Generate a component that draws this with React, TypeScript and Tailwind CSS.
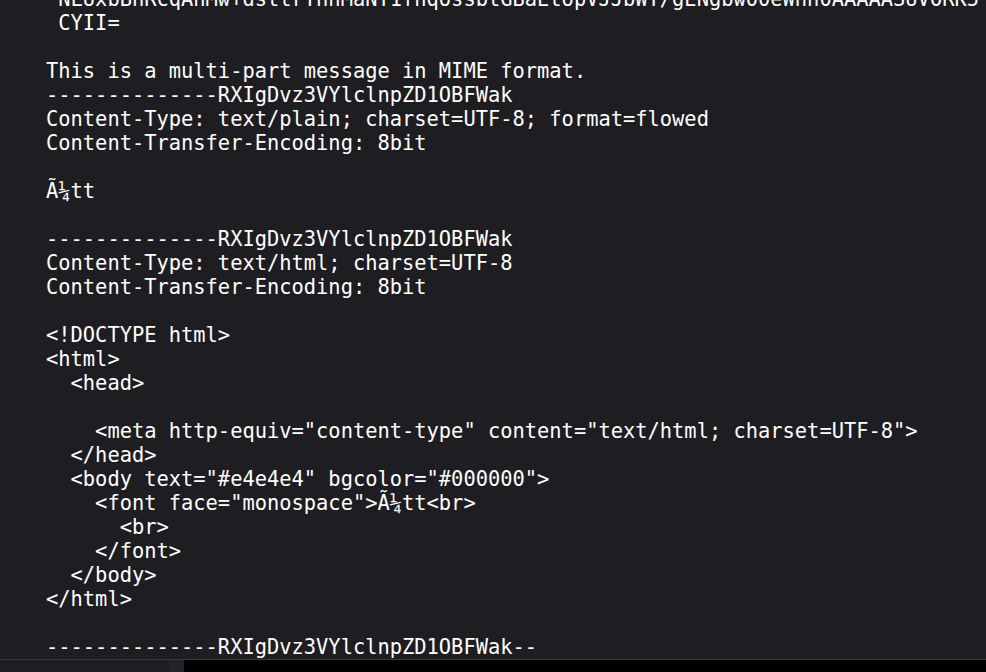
const boundary = "--------------RXIgDvz3VYlclnpZD1OBFWak";

const lines: string[] = [
  " NLUxbBhRcqAhMw+dsttrYhhMaNT1fhqossbtGBaEtopVJJbWY/gENgbw00eWhh0AAAAASUVORK5",
  " CYII=",
  "",
  "This is a multi-part message in MIME format.",
  boundary,
  "Content-Type: text/plain; charset=UTF-8; format=flowed",
  "Content-Transfer-Encoding: 8bit",
  "",
  "Ã¼tt",
  "",
  boundary,
  "Content-Type: text/html; charset=UTF-8",
  "Content-Transfer-Encoding: 8bit",
  "",
  "<!DOCTYPE html>",
  "<html>",
  "  <head>",
  "",
  '    <meta http-equiv="content-type" content="text/html; charset=UTF-8">',
  "  </head>",
  '  <body text="#e4e4e4" bgcolor="#000000">',
  '    <font face="monospace">Ã¼tt<br>',
  "      <br>",
  "    </font>",
  "  </body>",
  "</html>",
  "",
  boundary + "--",
];

export default function App() {
  return (
    <div className="w-[986px] h-[672px] flex flex-col bg-[#1e1d22] overflow-hidden">
      {/* message source view */}
      <div className="h-[659px] overflow-hidden">
        <div className="-mt-[13px] pl-[46px] font-['DejaVu_Sans_Mono',monospace] text-[20.4px] leading-[24px] text-white">
          {lines.map((line, i) => (
            <div key={i} className="h-[24px] whitespace-pre">
              {line}
            </div>
          ))}
        </div>
      </div>

      {/* bottom status strip */}
      <div className="h-[13px] border-t border-[#3a3a3d] flex">
        <div className="w-[169px] bg-[#1e1d22]" />
        <div className="w-[15px] bg-[#242328]" />
        <div className="flex-1 bg-black" />
      </div>
    </div>
  );
}
